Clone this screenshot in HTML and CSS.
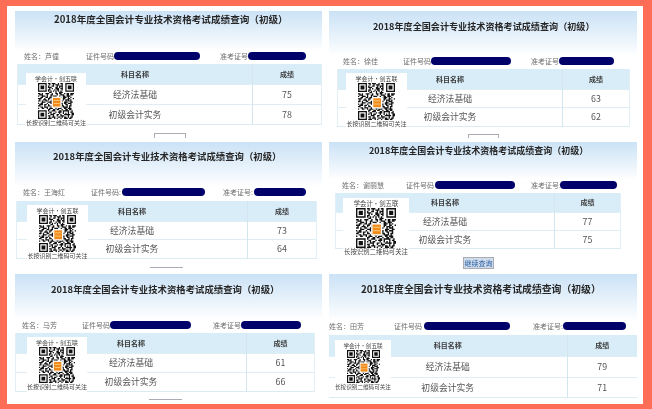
FILE: index.html
```html
<!DOCTYPE html>
<html lang="zh">
<head>
<meta charset="utf-8">
<title>2018年度全国会计专业技术资格考试成绩查询</title>
<link rel="stylesheet" href="styles.css">
</head>
<body>
<svg class="sprite" aria-hidden="true">
  <symbol id="qr" viewBox="0 0 29 29">
    <path fill="#111" fill-rule="evenodd" d="M0 0h7v7H0zM1 1v5h5V1zM2 2h3v3H2zM22 0h7v7h-7zM23 1v5h5V1zM24 2h3v3h-3zM0 22h7v7H0zM1 23v5h5v-5zM2 24h3v3H2z"/>
    <path fill="none" stroke="#111" stroke-width="1" d="M8 .5h2m1 0h3m2 0h1m1 0h2M9 1.5h1m2 0h1m1 0h3m2 0h1M8 2.5h1m2 0h2m2 0h1m1 0h3M8 3.5h3m3 0h2m1 0h1m1 0h1M9 4.5h1m1 0h1m2 0h3m1 0h2M8 5.5h2m3 0h1m1 0h2m2 0h1M8 6.5h1m1 0h1m1 0h1m1 0h1m1 0h1m1 0h1M9 7.5h2m3 0h1m2 0h3M0 8.5h2m1 0h1m2 0h3m2 0h1m2 0h2m1 0h2m2 0h1m1 0h2m1 0h3M1 9.5h3m3 0h1m2 0h2m3 0h1m2 0h3m2 0h2m1 0h2M0 10.5h1m2 0h3m1 0h1m2 0h1m1 0h3m2 0h1m2 0h2m1 0h3M2 11.5h2m2 0h2m1 0h3m2 0h1m3 0h1m1 0h3m1 0h1m1 0h1M0 12.5h3m2 0h1m2 0h2m1 0h1m8 0h2m2 0h2m2 0h1M1 13.5h1m2 0h3m1 0h1m2 0h1m8 0h1m1 0h3m1 0h1M0 14.5h2m1 0h1m2 0h2m2 0h2m7 0h1m2 0h1m1 0h3M3 15.5h3m2 0h3m1 0h1m8 0h3m2 0h2M0 16.5h1m1 0h2m3 0h1m2 0h2m6 0h2m1 0h2m1 0h3M1 17.5h3m1 0h2m1 0h1m3 0h3m2 0h1m1 0h1m2 0h2m2 0h1M0 18.5h2m3 0h1m2 0h2m1 0h1m3 0h2m2 0h2m2 0h1m1 0h2M2 19.5h2m1 0h3m2 0h1m2 0h3m2 0h1m1 0h4m1 0h1M0 20.5h1m2 0h2m2 0h1m1 0h3m2 0h1m1 0h3m2 0h2m1 0h3M8 21.5h2m2 0h2m1 0h2m2 0h1m2 0h2m1 0h2M8 22.5h1m2 0h3m3 0h2m1 0h5m2 0h1M9 23.5h2m3 0h1m1 0h3m1 0h1m3 0h1m1 0h2M8 24.5h1m1 0h1m1 0h2m3 0h1m2 0h1m1 0h1m1 0h1m2 0h2M10 25.5h3m2 0h2m1 0h1m2 0h5m1 0h2M8 26.5h2m2 0h1m2 0h1m2 0h3m3 0h1m2 0h1M9 27.5h1m1 0h3m2 0h2m1 0h1m1 0h2m1 0h1m1 0h2M8 28.5h3m2 0h1m1 0h1m2 0h1m2 0h3m1 0h2"/>
    <rect x="11" y="11" width="8" height="9" fill="#fff"/>
    <rect x="12" y="12" width="6" height="7" fill="#f08a1c"/>
    <path d="M12.5 14h5M12.5 16.5h5" stroke="#ffd98a" stroke-width=".6"/>
  </symbol>
</svg>
<main class="sheet">
  <section class="shot s1">
    <header class="head"><h1 class="title">2018年度全国会计专业技术资格考试成绩查询（初级）</h1></header>
    <div class="info">
      <div class="f-name">姓名：芦僮</div>
      <div class="f-id"><span class="lab">证件号码</span><i class="pill"></i></div>
      <div class="f-no"><span class="lab">准考证号</span><i class="pill"></i></div>
    </div>
    <table class="scores">
      <tr class="r0"><th>科目名称</th><th class="sc">成绩</th></tr>
      <tr class="r1"><td>经济法基础</td><td class="sc">75</td></tr>
      <tr class="r2"><td>初级会计实务</td><td class="sc">78</td></tr>
    </table>
    <div class="more"></div>
    <aside class="qr">
      <p class="qr-t">学会计•剑五联</p>
      <svg class="qr-i" aria-hidden="true"><use href="#qr"/></svg>
      <p class="qr-b">长按识别二维码可关注</p>
    </aside>
  </section>
  <section class="shot s2">
    <header class="head"><h1 class="title">2018年度全国会计专业技术资格考试成绩查询（初级）</h1></header>
    <div class="info">
      <div class="f-name">姓名：徐佳</div>
      <div class="f-id"><span class="lab">证件号码</span><i class="pill"></i></div>
      <div class="f-no"><span class="lab">准考证号</span><i class="pill"></i></div>
    </div>
    <table class="scores">
      <tr class="r0"><th>科目名称</th><th class="sc">成绩</th></tr>
      <tr class="r1"><td>经济法基础</td><td class="sc">63</td></tr>
      <tr class="r2"><td>初级会计实务</td><td class="sc">62</td></tr>
    </table>
    <div class="more"></div>
    <aside class="qr">
      <p class="qr-t">学会计•剑五联</p>
      <svg class="qr-i" aria-hidden="true"><use href="#qr"/></svg>
      <p class="qr-b">长按识别二维码可关注</p>
    </aside>
  </section>
  <section class="shot s3">
    <header class="head"><h1 class="title">2018年度全国会计专业技术资格考试成绩查询（初级）</h1></header>
    <div class="info">
      <div class="f-name">姓名：王海红</div>
      <div class="f-id"><span class="lab">证件号码:</span><i class="pill"></i></div>
      <div class="f-no"><span class="lab">准考证号:</span><i class="pill"></i></div>
    </div>
    <table class="scores">
      <tr class="r0"><th>科目名称</th><th class="sc">成绩</th></tr>
      <tr class="r1"><td>经济法基础</td><td class="sc">73</td></tr>
      <tr class="r2"><td>初级会计实务</td><td class="sc">64</td></tr>
    </table>
    <div class="more"></div>
    <aside class="qr">
      <p class="qr-t">学会计•剑五联</p>
      <svg class="qr-i" aria-hidden="true"><use href="#qr"/></svg>
      <p class="qr-b">长按识别二维码可关注</p>
    </aside>
  </section>
  <section class="shot s4">
    <header class="head"><h1 class="title">2018年度全国会计专业技术资格考试成绩查询（初级）</h1></header>
    <div class="info">
      <div class="f-name">姓名：谢丽慧</div>
      <div class="f-id"><span class="lab">证件号码</span><i class="pill"></i></div>
      <div class="f-no"><span class="lab">准考证号:</span><i class="pill"></i></div>
    </div>
    <table class="scores">
      <tr class="r0"><th>科目名称</th><th class="sc">成绩</th></tr>
      <tr class="r1"><td>经济法基础</td><td class="sc">77</td></tr>
      <tr class="r2"><td>初级会计实务</td><td class="sc">75</td></tr>
    </table>
    <div class="more">继续查询</div>
    <aside class="qr">
      <p class="qr-t">学会计•剑五联</p>
      <svg class="qr-i" aria-hidden="true"><use href="#qr"/></svg>
      <p class="qr-b">长按识别二维码可关注</p>
    </aside>
  </section>
  <section class="shot s5">
    <header class="head"><h1 class="title">2018年度全国会计专业技术资格考试成绩查询（初级）</h1></header>
    <div class="info">
      <div class="f-name">姓名：马芳</div>
      <div class="f-id"><span class="lab">证件号码</span><i class="pill"></i></div>
      <div class="f-no"><span class="lab">准考证号</span><i class="pill"></i></div>
    </div>
    <table class="scores">
      <tr class="r0"><th>科目名称</th><th class="sc">成绩</th></tr>
      <tr class="r1"><td>经济法基础</td><td class="sc">61</td></tr>
      <tr class="r2"><td>初级会计实务</td><td class="sc">66</td></tr>
    </table>
    <div class="more"></div>
    <aside class="qr">
      <p class="qr-t">学会计•剑五联</p>
      <svg class="qr-i" aria-hidden="true"><use href="#qr"/></svg>
      <p class="qr-b">长按识别二维码可关注</p>
    </aside>
  </section>
  <section class="shot s6">
    <header class="head"><h1 class="title">2018年度全国会计专业技术资格考试成绩查询（初级）</h1></header>
    <div class="info">
      <div class="f-name">姓名：田芳</div>
      <div class="f-id"><span class="lab">证件号码</span><i class="pill"></i></div>
      <div class="f-no"><span class="lab">准考证号:</span><i class="pill"></i></div>
    </div>
    <table class="scores">
      <tr class="r0"><th>科目名称</th><th class="sc">成绩</th></tr>
      <tr class="r1"><td>经济法基础</td><td class="sc">79</td></tr>
      <tr class="r2"><td>初级会计实务</td><td class="sc">71</td></tr>
    </table>
    <aside class="qr">
      <p class="qr-t">学会计•剑五联</p>
      <svg class="qr-i" aria-hidden="true"><use href="#qr"/></svg>
      <p class="qr-b">长按识别二维码可关注</p>
    </aside>
  </section>
</main>
</body>
</html>
```
FILE: styles.css
```css
html, body {
  margin: 0;
  padding: 0;
  width: 652px;
  height: 409px;
  overflow: hidden;
  background: #fe6d55;
  font-family: "Noto Sans CJK SC", "Liberation Sans", sans-serif;
}

.sprite { display: none; }

/* white sheet: the six screenshots are pasted on it as on a free canvas */
.sheet {
  position: absolute;
  left: 7px;
  top: 6px;
  width: 636px;
  height: 398px;
  background: #fff;
  overflow: hidden;
}

.shot {
  position: absolute;
  left: calc(var(--x) - 7px);
  top: calc(var(--y) - 6px);
  width: var(--w);
  height: var(--h);
  overflow: hidden;
  filter: blur(0.5px);
}

.s1 { --x: 15px; --y: 11px; --w: 307px; --h: 127px; --tx: 39px; --tt: 2px; --tf: 9.6px; --head: 40px; --gap: 3px;
  --pl: 9px; --w1: 62px; --w2: 134px; --lab: 28px; --p1: 86px; --p2: 58px; --tl: 2px; --tw: 305px; --c2: 69px;
  --r0: 20px; --r1: 20px; --r2: 20px; --bm: 8px; --bl: 139px; --bw: 32px;
  --qx: 11px; --qy: 62px; --qw: 60px; --qh: 55px; --qs: 36px; --qf: 6px; }
.s2 { --x: 329px; --y: 11px; --w: 308px; --h: 127px; --tx: 44px; --tt: 9px; --tf: 9.1px; --head: 45px; --gap: 3px;
  --pl: 14px; --w1: 60px; --w2: 128px; --lab: 28px; --p1: 80px; --p2: 55px; --tl: 8px; --tw: 293px; --c2: 67px;
  --r0: 20px; --r1: 18px; --r2: 19px; --bm: 7px; --bl: 139px; --bw: 31px;
  --qx: 17px; --qy: 62px; --qw: 61px; --qh: 57px; --qs: 37px; --qf: 6px; }
.s3 { --x: 15px; --y: 142px; --w: 307px; --h: 126px; --tx: 38px; --tt: 8px; --tf: 9.4px; --head: 45px; --gap: 4px;
  --pl: 8px; --w1: 68px; --w2: 132px; --lab: 31px; --p1: 83px; --p2: 52px; --tl: 1px; --tw: 301px; --c2: 69px;
  --r0: 20px; --r1: 18px; --r2: 19px; --bm: 8px; --bl: 135px; --bw: 33px;
  --qx: 12px; --qy: 63px; --qw: 61px; --qh: 57px; --qs: 37px; --qf: 6px; }
.s4 { --x: 329px; --y: 142px; --w: 308px; --h: 127px; --tx: 40px; --tt: 3px; --tf: 9px; --head: 38px; --gap: 3px;
  --pl: 13px; --w1: 64px; --w2: 125px; --lab: 29px; --p1: 80px; --p2: 57px; --tl: 6px; --tw: 286px; --c2: 66px;
  --r0: 19px; --r1: 18px; --r2: 18px; --bm: 8px; --bl: 134px; --bw: 31px;
  --qx: 14px; --qy: 56px; --qw: 66px; --qh: 61px; --qs: 40px; --qf: 6.4px; }
.s5 { --x: 15px; --y: 274px; --w: 307px; --h: 126px; --tx: 36px; --tt: 9px; --tf: 9.4px; --head: 46px; --gap: 3px;
  --pl: 7px; --w1: 60px; --w2: 131px; --lab: 28px; --p1: 81px; --p2: 60px; --tl: 0px; --tw: 300px; --c2: 68px;
  --r0: 20px; --r1: 19px; --r2: 19px; --bm: 7px; --bl: 134px; --bw: 33px;
  --qx: 12px; --qy: 63px; --qw: 60px; --qh: 56px; --qs: 36px; --qf: 6px; }
.s6 { --x: 329px; --y: 274px; --w: 308px; --h: 127px; --tx: 32px; --tt: 9px; --tf: 9.85px; --head: 47px; --gap: 4px;
  --pl: 0px; --w1: 65px; --w2: 139px; --lab: 30px; --p1: 86px; --p2: 63px; --tl: 0px; --tw: 308px; --c2: 70px;
  --r0: 21px; --r1: 21px; --r2: 20px; --bm: 0px; --bl: 0px; --bw: 0px;
  --qx: 6px; --qy: 66px; --qw: 56px; --qh: 53px; --qs: 33px; --qf: 5.6px; }

.head {
  height: var(--head);
  box-sizing: border-box;
  padding: var(--tt) 0 0 var(--tx);
  background: linear-gradient(#cbe2f6 0%, #e4f0fa 50%, #ffffff 100%);
}

.title {
  margin: 0;
  font-size: var(--tf);
  line-height: 12px;
  font-weight: 700;
  color: #262626;
  white-space: nowrap;
}

.info {
  display: flex;
  align-items: center;
  height: 10px;
  padding-left: var(--pl);
  margin-bottom: var(--gap);
  font-size: 7px;
  line-height: 10px;
  color: #6d6d6d;
  white-space: nowrap;
}

.f-name { width: var(--w1); flex: none; }
.f-id { width: var(--w2); flex: none; display: flex; align-items: center; }
.f-no { flex: none; display: flex; align-items: center; }
.lab { width: var(--lab); flex: none; overflow: hidden; }

.pill {
  display: block;
  height: 8px;
  border-radius: 4px;
  background: #00006b;
}
.f-id .pill { width: var(--p1); }
.f-no .pill { width: var(--p2); }

.scores {
  margin-left: var(--tl);
  width: var(--tw);
  border-collapse: collapse;
  table-layout: fixed;
  border-bottom: 1px solid #dcecf3;
  border-right: 1px solid #e2eff5;
  border-left: 1px solid #e2eff5;
  box-sizing: border-box;
}
.s6 .scores { border-left: 0; border-right: 0; }

.scores th, .scores td {
  padding: 0;
  text-align: center;
  white-space: nowrap;
}
.scores th {
  font-size: 7px;
  font-weight: 700;
  color: #3a3a3a;
  background: #d9edf9;
}
.scores td {
  font-size: 8.8px;
  color: #555;
  border-top: 1px solid #dfeef4;
}
.scores .sc {
  width: var(--c2);
  box-sizing: border-box;
  border-left: 1px solid #d3e5ee;
}
.r0 { height: var(--r0); }
.r1 { height: var(--r1); }
.r2 { height: var(--r2); }

.more {
  width: var(--bw);
  height: 12px;
  box-sizing: border-box;
  margin: var(--bm) 0 0 var(--bl);
  border: 1px solid #a9adb3;
  background: #cfdcea;
  color: #2b5fa8;
  font-size: 7px;
  line-height: 10px;
  text-align: center;
  white-space: nowrap;
  overflow: hidden;
}
.s1 .more, .s2 .more { background: #fff; }
.s3 .more, .s5 .more { border-top-width: 2px; }

/* QR sticker pasted over each table */
.qr {
  position: absolute;
  left: var(--qx);
  top: var(--qy);
  width: var(--qw);
  height: var(--qh);
  box-sizing: border-box;
  padding-top: 2px;
  background: #fff;
  overflow: hidden;
  display: flex;
  flex-direction: column;
  align-items: center;
  font-family: "Noto Sans CJK SC", "Liberation Serif", serif;
  font-size: var(--qf);
  line-height: 8px;
  color: #444;
}
.qr p { margin: 0; white-space: nowrap; }
.qr-i { display: block; width: var(--qs); height: var(--qs); flex: none; }
```
